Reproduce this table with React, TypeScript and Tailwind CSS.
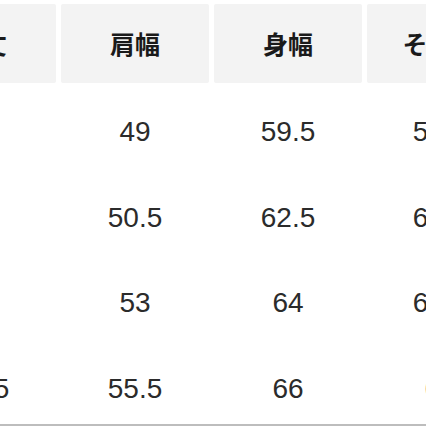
const headers = ['着丈', '肩幅', '身幅', 'そで丈'];

const rows = [
  ['68', '49', '59.5', '58.5'],
  ['70', '50.5', '62.5', '60.5'],
  ['72', '53', '64', '62.5'],
  ['74.5', '55.5', '66', '64'],
];

const rowHeights = ['h-[86px]', 'h-[85px]', 'h-[85px]', 'h-[81px] pt-[9px] border-b-2 border-[#bdbdbd]'];

export default function App() {
  return (
    <div className="w-[426px] h-[426px] overflow-hidden bg-white">
      <div className="w-[612px] -ml-[92px] pt-[4px]">
        {/* Header */}
        <div className="grid grid-cols-[148px_148px_148px_146px] gap-x-[5px]">
          {headers.map((h) => (
            <div
              key={h}
              className="h-[79px] bg-[#f3f3f3] rounded-[2px] flex items-center justify-center text-[25px] font-bold text-[#1a1a1a] [font-family:'Noto_Sans_CJK_JP',sans-serif]"
            >
              {h}
            </div>
          ))}
        </div>

        {/* Body */}
        <div className="mt-[6px]">
          {rows.map((r, i) => (
            <div
              key={i}
              className={`grid grid-cols-[148px_148px_148px_146px] gap-x-[5px] ${rowHeights[i]}`}
            >
              {r.map((v, j) => (
                <div
                  key={j}
                  className="flex items-center justify-center text-[28px] leading-none text-[#2b2b2b] [font-family:'Liberation_Sans',Arial,sans-serif]"
                >
                  {v}
                </div>
              ))}
            </div>
          ))}
        </div>
      </div>
    </div>
  );
}
